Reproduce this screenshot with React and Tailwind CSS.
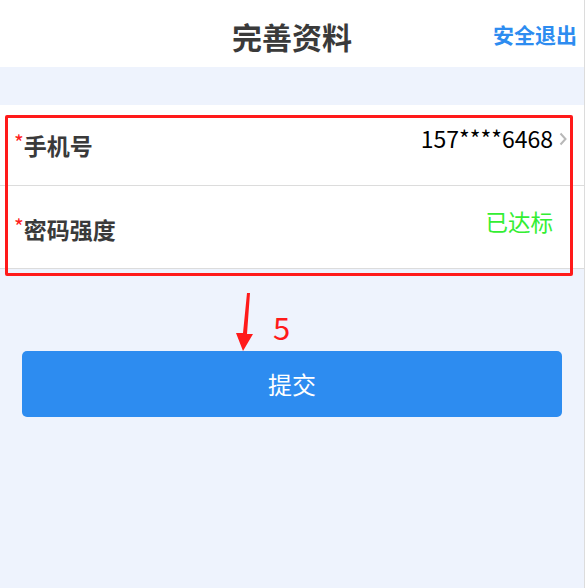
export default function App() {
  return (
    <div
      className="relative h-[588px] w-[588px] overflow-hidden bg-white"
      style={{ fontFamily: '"Noto Sans CJK SC", "Noto Sans", sans-serif' }}
    >
      <div className="flex h-full w-[585px] flex-col border-r border-[#dcdcdc] bg-[#eef3fd]">
        {/* header */}
        <div className="relative flex h-[67px] shrink-0 items-center justify-center bg-white">
          <h1 className="mt-[4px] text-[30px] font-bold leading-none text-[#3a3a3a]">完善资料</h1>
          <button className="absolute right-[7px] top-[24px] text-[21px] font-bold leading-none text-[#2d8cf0]">
            安全退出
          </button>
        </div>

        {/* form list */}
        <div className="mt-[38px] border-b border-[#dcdcdc] bg-white">
          <div className="flex h-[81px] items-start justify-between border-b border-[#dcdcdc] pl-[14px] pr-[17px]">
            <div className="mt-[29px] flex items-start">
              <span className="mt-[-2px] text-[21px] leading-none text-[#ff2020]">*</span>
              <span className="text-[23px] font-bold leading-none text-[#3a3a3a]">手机号</span>
            </div>
            <div className="mt-[22px] flex items-center">
              <span className="text-[23px] leading-none text-black">157****6468</span>
              <svg className="ml-[6px]" width="8" height="14" viewBox="0 0 8 14">
                <polyline points="1.5,1.5 6.5,7 1.5,12.5" fill="none" stroke="#b8b8b8" strokeWidth="2" />
              </svg>
            </div>
          </div>
          <div className="flex h-[82px] items-start justify-between pl-[14px] pr-[31px]">
            <div className="mt-[32px] flex items-start">
              <span className="mt-[-2px] text-[21px] leading-none text-[#ff2020]">*</span>
              <span className="text-[23px] font-bold leading-none text-[#3a3a3a]">密码强度</span>
            </div>
            <span className="mt-[24px] text-[22.5px] leading-none text-[#33ee33]">已达标</span>
          </div>
        </div>

        {/* submit */}
        <div className="mt-[82px] px-[22px]">
          <button className="flex h-[66px] w-[540px] items-center justify-center rounded-[5px] bg-[#2d8cf0] text-[24px] text-white">
            提交
          </button>
        </div>
      </div>

      {/* annotation overlay */}
      <div className="absolute left-[5px] top-[115px] h-[161px] w-[568px] rounded-[2px] border-[3px] border-[#ff1a1a]" />
      <svg className="absolute left-[232px] top-[290px]" width="24" height="62" viewBox="0 0 24 62">
        <polygon points="15,3 18,3 15,44 21,44 11,61 4,43 11,43" fill="#ff1a1a" />
      </svg>
      <span className="absolute left-[273px] top-[311px] text-[31px] leading-none text-[#ff1a1a]">5</span>
    </div>
  );
}
